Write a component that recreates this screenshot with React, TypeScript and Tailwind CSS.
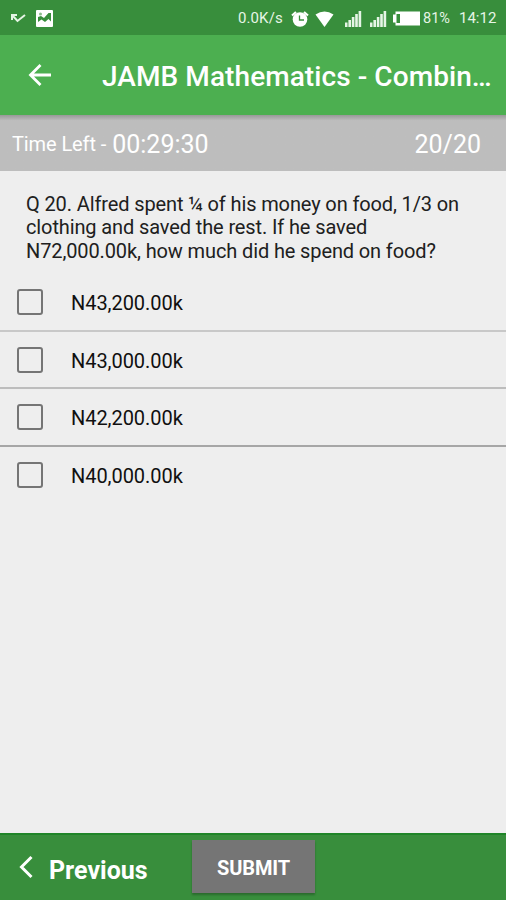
import { useState } from 'react';

const options = [
  { label: 'N43,200.00k', line: 'border-[#c8c8c8]' },
  { label: 'N43,000.00k', line: 'border-[#bdbdbd]' },
  { label: 'N42,200.00k', line: 'border-[#a6a6a6]' },
  { label: 'N40,000.00k', line: 'border-transparent' },
];

function SignalIcon() {
  return (
    <svg width="18" height="18" viewBox="0 0 18 18" fill="currentColor">
      <path d="M1 12.500h2.500V17H1zM4.400 10h2.600v7H4.400zM7.800 7h2.600v10H7.800zM11.200 4h2.600v13h-2.600zM14.600 1h2.600v16h-2.600z" />
    </svg>
  );
}

function StatusBar() {
  return (
    <div className="flex h-[35px] shrink-0 items-center bg-[#388e3c] pt-[2px] pl-[10px] text-[15px] text-[#e6f5e6]">
      <svg width="16" height="12" viewBox="0 0 16 12" fill="none" stroke="currentColor" strokeWidth="2">
        <path d="M2 7V2h5M2.500 2.500l5 5.500L15 2" />
      </svg>
      <svg className="ml-[10px] text-white" width="17" height="17" viewBox="0 0 17 17">
        <rect width="17" height="17" rx="1" fill="currentColor" />
        <path d="M2 12V7l3-1 3 2L12.500 3H15v8.500L12.500 9 9 12 5.500 9.500z" fill="#388e3c" />
        <circle cx="4.500" cy="4" r="1.500" fill="#8abf8c" />
      </svg>
      <span className="ml-[185px] w-[53px] whitespace-nowrap tracking-[0.1px]">0.0K/s</span>
      <svg className="text-white" width="18" height="18" viewBox="0 0 18 18">
        <circle cx="9" cy="9.500" r="7.300" fill="currentColor" />
        <path d="M1 5.500l4-3.500M17 5.500l-4-3.500" stroke="currentColor" strokeWidth="2.200" />
        <path d="M8.500 5.500V10H13" fill="none" stroke="#388e3c" strokeWidth="1.300" />
      </svg>
      <svg className="ml-[6px] text-white" width="19" height="16" viewBox="0 0 18 16" fill="currentColor">
        <path d="M0 3.500Q9-2.500 18 3.500L9 16z" />
      </svg>
      <div className="ml-[10px] flex gap-[7px] pt-[1px]">
        <SignalIcon />
        <SignalIcon />
      </div>
      <svg className="ml-[5px] text-white" width="29" height="15" viewBox="0 0 29 15">
        <path d="M3.500 0.500H28v14H3.500V11.500H1v-8h2.500z" fill="currentColor" />
        <rect x="4.500" y="3" width="3.500" height="9" fill="#388e3c" />
      </svg>
      <span className="ml-[2px] w-[36px] whitespace-nowrap text-[14.500px]">81%</span>
      <span className="whitespace-nowrap">14:12</span>
    </div>
  );
}

export default function App() {
  const [checked, setChecked] = useState<number | null>(null);

  return (
    <div className="flex h-[900px] w-[506px] flex-col overflow-hidden bg-[#eeeeee] font-[Roboto,sans-serif]">
      <StatusBar />

      <header className="flex h-[80px] shrink-0 items-center bg-[#4caf50] pl-[28px] text-white">
        <button aria-label="Back">
          <svg width="24" height="24" viewBox="0 0 24 24" fill="none" stroke="currentColor" strokeWidth="2.800">
            <path d="M23 12H3M12.500 2L2.500 12l10 10" />
          </svg>
        </button>
        <h1 className="ml-[50px] pt-[4px] text-[28px] font-medium tracking-[0.080px] whitespace-nowrap">
          JAMB Mathematics - Combin…
        </h1>
      </header>

      <div className="flex h-[56px] shrink-0 items-center justify-between bg-[#bdbdbd] bg-linear-to-b from-[#999999] from-0% to-[#bdbdbd] to-10% pt-[4px] pr-[25px] pl-[12px] text-white">
        <div className="flex items-center">
          <span className="pb-[3px] text-[20px] tracking-[-0.1px]">Time Left -</span>
          <span className="ml-[6px] text-[25px]">00:29:30</span>
        </div>
        <span className="text-[25px]">20/20</span>
      </div>

      <main className="flex-1">
        <p className="h-[103px] pt-[22px] pl-[26px] text-[20px] leading-[23.400px] tracking-[-0.120px] text-[#202020]">
          Q 20. Alfred spent ¼ of his money on food, 1/3 on
          <br />
          clothing and saved the rest. If he saved
          <br />
          N72,000.00k, how much did he spend on food?
        </p>
        {options.map(({ label, line }, idx) => (
          <button
            key={label}
            onClick={() => setChecked(idx)}
            className={`flex h-[57.700px] w-full items-center border-b-2 pl-[17px] text-left text-[20px] text-[#101010] ${line}`}
          >
            <span className="flex size-[26px] items-center justify-center rounded-[3px] border-[2.500px] border-[#757575]">
              {checked === idx && <span className="size-[14px] bg-[#388e3c]" />}
            </span>
            <span className="ml-[28px] pt-[2px] tracking-[-0.050px]">{label}</span>
          </button>
        ))}
      </main>

      <footer className="flex h-[67px] shrink-0 items-center border-t-2 border-[#1f8528] bg-[#388e3c] pl-[18px] text-white">
        <button className="flex items-center">
          <svg className="mb-[2px]" width="15" height="24" viewBox="0 0 15 24" fill="none" stroke="currentColor" strokeWidth="3">
            <path d="M13.500 2L3.500 12l10 10" />
          </svg>
          <span className="ml-[16px] w-[143px] pt-[6px] text-left text-[25px] font-bold">Previous</span>
        </button>
        <button className="mb-[2px] h-[53px] w-[123px] bg-[#757575] pt-[2px] text-[20px] font-bold tracking-[-0.1px] shadow-[0_2px_2px_rgba(0,0,0,0.25)]">
          SUBMIT
        </button>
      </footer>
    </div>
  );
}
